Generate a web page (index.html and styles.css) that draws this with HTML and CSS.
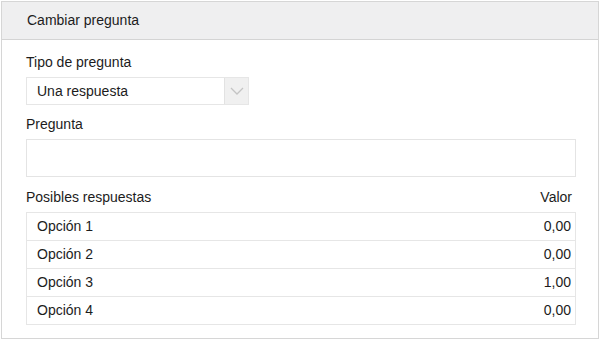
FILE: index.html
```html
<!DOCTYPE html>
<html lang="es">
<head>
  <meta charset="UTF-8" />
  <title>Cambiar pregunta</title>
  <link rel="stylesheet" href="styles.css">
</head>
<body>
  <div class="panel">
    <div class="panel-header">Cambiar pregunta</div>
    <div class="panel-body">
      <label class="field-label">Tipo de pregunta</label>
      <div class="select">
        <span class="select-value">Una respuesta</span>
        <span class="select-arrow">
          <svg width="14" height="8" viewBox="0 0 14 8"><path d="M1 1 L7 7 L13 1" fill="none" stroke="#c4c4c4" stroke-width="1.3"/></svg>
        </span>
      </div>

      <label class="field-label">Pregunta</label>
      <div class="textbox"></div>

      <div class="answers-head">
        <span>Posibles respuestas</span>
        <span>Valor</span>
      </div>
      <div class="answers">
        <div class="answer"><span>Opción 1</span><span>0,00</span></div>
        <div class="answer"><span>Opción 2</span><span>0,00</span></div>
        <div class="answer"><span>Opción 3</span><span>1,00</span></div>
        <div class="answer"><span>Opción 4</span><span>0,00</span></div>
      </div>
    </div>
  </div>
</body>
</html>
```

FILE: styles.css
```css
body {
  margin: 0;
  font-family: "Liberation Sans", Arial, sans-serif;
  font-size: 14px;
  color: #1c1c1c;
  background: #fff;
}
.panel {
  margin: 1px;
  width: 596px;
  height: 336px;
  border: 1px solid #d6d6d6;
  box-sizing: content-box;
}
.panel-header {
  height: 37px;
  line-height: 37px;
  padding-left: 25px;
  background: #efeff0;
  border-bottom: 1px solid #d4d4d4;
}
.panel-body {
  padding: 14px 22px 0 24px;
}
.field-label {
  display: block;
  line-height: 17px;
  margin-bottom: 6px;
}
.select {
  display: flex;
  width: 221px;
  height: 26px;
  border: 1px solid #e6e6e6;
  margin-bottom: 11px;
}
.select-value {
  flex: 1;
  line-height: 26px;
  padding-left: 10px;
}
.select-arrow {
  width: 23px;
  background: #f0f0f0;
  border-left: 1px solid #e2e2e2;
  display: flex;
  align-items: center;
  justify-content: center;
}
.textbox {
  height: 36px;
  border: 1px solid #e4e4e4;
  margin-bottom: 12px;
}
.answers-head {
  display: flex;
  justify-content: space-between;
  line-height: 17px;
  padding-right: 4px;
  margin-bottom: 6px;
}
.answers {
  border: 1px solid #e6e6e6;
}
.answer {
  display: flex;
  justify-content: space-between;
  height: 27px;
  line-height: 27px;
  padding: 0 4px 0 10px;
  border-top: 1px solid #e6e6e6;
}
.answer:first-child {
  border-top: none;
}
```
